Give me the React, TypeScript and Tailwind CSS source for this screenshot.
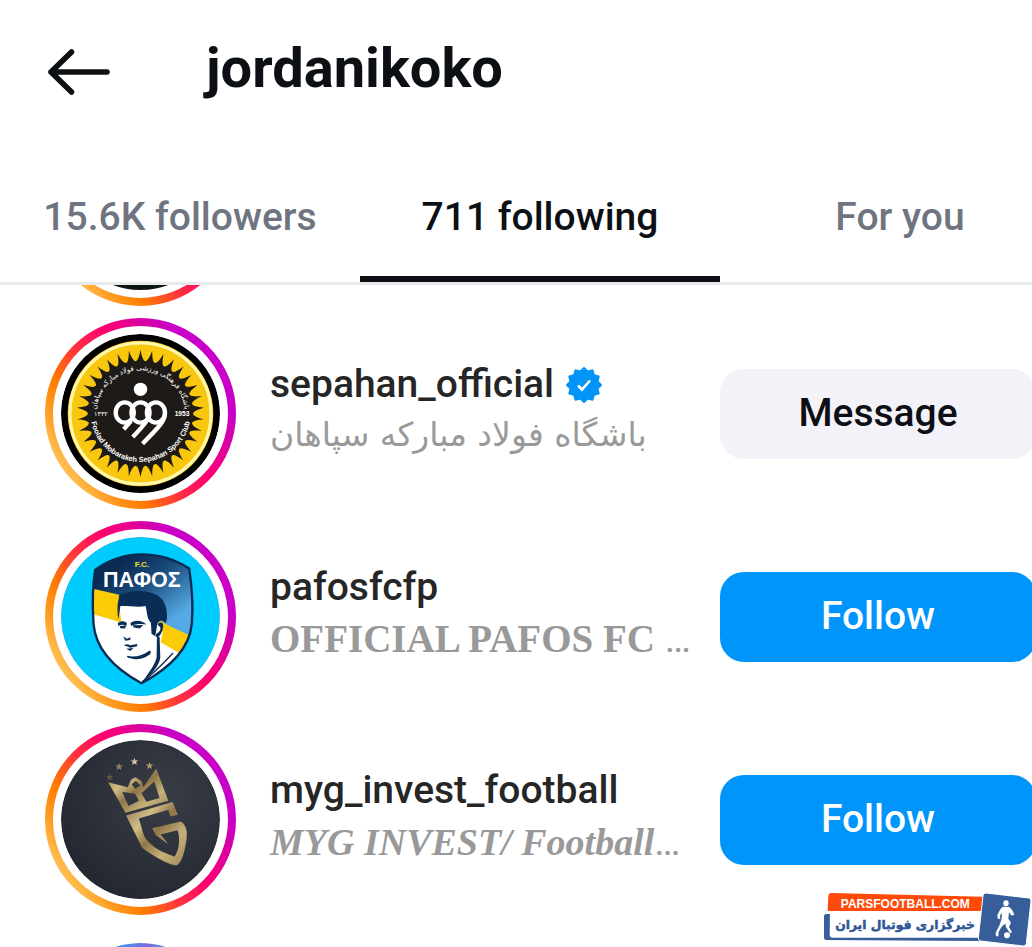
import type { ReactNode } from 'react'
import clsx from 'clsx'

interface Account {
  username: string
  fullName?: string
  nameClass?: string
  dir?: 'rtl' | 'ltr'
  verified?: boolean
  action?: 'Message' | 'Follow'
  story: boolean
  avatar: ReactNode
}

const SANS = "font-['Roboto','DejaVu_Sans',sans-serif]"

// Closed outline alternating between tips, with rounded valleys in between
function burstPath(cx: number, cy: number, count: number, outer: number, valley: number) {
  const step = (Math.PI * 2) / count
  const at = (angle: number, r: number) =>
    `${(cx + Math.cos(angle) * r).toFixed(1)} ${(cy + Math.sin(angle) * r).toFixed(1)}`
  let d = `M${at(-Math.PI / 2, outer)}`
  for (let i = 0; i < count; i++) {
    const a = -Math.PI / 2 + i * step
    d += `C${at(a + step * 0.3, valley)} ${at(a + step * 0.7, valley)} ${at(a + step, outer)}`
  }
  return `${d}Z`
}

function starPath(cx: number, cy: number, outer: number, inner: number, points: number) {
  const list: string[] = []
  for (let i = 0; i < points * 2; i++) {
    const a = -Math.PI / 2 + (i * Math.PI) / points
    const r = i % 2 === 0 ? outer : inner
    list.push(`${(cx + Math.cos(a) * r).toFixed(1)},${(cy + Math.sin(a) * r).toFixed(1)}`)
  }
  return list.join(' ')
}

function SepahanLogo() {
  return (
    <svg viewBox="63 191 474 474" className="size-full" aria-hidden="true">
      <defs>
        <path id="sepahan-top" d="M167 432A133 133 0 0 1 433 432" />
        <path id="sepahan-bottom" d="M151 440A150 150 0 0 0 449 440" />
      </defs>
      <circle cx="300" cy="428" r="237" fill="#000" />
      <circle cx="300" cy="428" r="217" fill="#f3c91c" />
      <circle cx="300" cy="428" r="210" fill="none" stroke="#fff6b0" strokeWidth="9" />
      <circle cx="300" cy="428" r="204" fill="#f9c80e" />
      <path d={burstPath(300, 428, 34, 190, 146)} fill="#1d1a17" />
      <text
        fill="#fff"
        fontSize="21"
        textAnchor="middle"
        direction="rtl"
        className="font-['DejaVu_Sans',sans-serif]"
      >
        <textPath href="#sepahan-top" startOffset="50%">
          باشگاه فرهنگی ورزشی فولاد مبارکه سپاهان
        </textPath>
      </text>
      <text
        fill="#fff"
        fontSize="22"
        fontWeight="700"
        textAnchor="middle"
        className="font-['Liberation_Sans',sans-serif]"
      >
        <textPath href="#sepahan-bottom" startOffset="50%">
          Foolad Mobarakeh Sepahan Sport Club
        </textPath>
      </text>
      <text x="424" y="435" fill="#fff" fontSize="20" fontWeight="700" textAnchor="middle" className="font-['Liberation_Sans',sans-serif]">
        1953
      </text>
      <text x="182" y="435" fill="#fff" fontSize="19" textAnchor="middle" className="font-['DejaVu_Sans',sans-serif]">
        ۱۳۳۲
      </text>
      <circle cx="300" cy="356" r="20" fill="#fff" />
      <g fill="none" stroke="#fff" strokeWidth="13">
        <ellipse cx="253" cy="425" rx="27" ry="30" />
        <ellipse cx="300" cy="425" rx="27" ry="30" />
        <ellipse cx="346" cy="425" rx="27" ry="30" />
        <path d="M272 450L250 475M326 436Q320 454 277 498M373 425C376 448 350 474 306 518" />
      </g>
    </svg>
  )
}

function PafosLogo() {
  const shield =
    'M303 118C358 118 405 134 445 160C452 205 458 265 453 325C446 400 385 458 303 502C222 458 166 400 160 325C156 265 157 210 165 164C206 134 250 118 303 118Z'
  return (
    <svg viewBox="63 66 474 474" className="size-full" aria-hidden="true">
      <defs>
        <linearGradient id="pafos-sky" x1="0.3" y1="0.1" x2="0.6" y2="0.62">
          <stop offset="0" stopColor="#0b2b54" />
          <stop offset="0.4" stopColor="#1a4c7c" />
          <stop offset="1" stopColor="#55a9e4" />
        </linearGradient>
        <clipPath id="pafos-shield">
          <path d={shield} />
        </clipPath>
      </defs>
      <circle cx="300" cy="303" r="236" fill="#00cbff" stroke="#16a5d3" strokeWidth="2" />
      <g clipPath="url(#pafos-shield)">
        <rect x="150" y="110" width="310" height="400" fill="url(#pafos-sky)" />
        <path d="M150 218L236 238L380 328L460 366V520H150Z" fill="#fccb08" />
        <path d="M150 293L232 318L360 380L460 438V520H150Z" fill="#fff" />
        <path d="M236 268H335L366 350L352 420L340 455L300 500L262 410L250 370Z" fill="#fff" />
      </g>
      <path
        d="M234 312C230 286 231 262 236 247C233 240 240 234 249 236C270 224 318 224 341 236C366 244 381 272 379 307C377 322 374 326 370 318C364 312 354 316 350 326L344 361L333 355L331 322C318 309 320 287 315 272C295 276 275 272 240 272Z"
        fill="#092d55"
      />
      <g fill="#092d55">
        <path d="M232 323C240 315 250 315 259 322L258 331C248 326 241 327 234 331Z" />
        <path d="M270 323C284 312 304 314 317 327C302 324 286 325 272 331Z" />
        <path d="M238 331L257 330L254 339L240 338ZM277 329L308 328L298 339L280 336Z" />
        <path d="M248 362L259 369L271 365L269 373L255 375Z" />
        <path d="M249 388L262 386L269 389L290 385L290 392L270 396Z" />
        <path d="M257 399L279 397L270 406Z" />
        <path d="M260 420C280 426 307 420 326 405C334 403 331 414 325 418C303 434 276 433 260 424Z" />
        <path d="M350 326C363 314 372 323 366 342C362 357 354 368 344 362L348 354C359 350 363 336 356 332Z" />
        <path d="M349 360L357 364L359 425C356 452 327 480 306 499C323 470 342 450 348 425Z" />
      </g>
      <path d="M397 412C372 438 336 478 305 497" fill="none" stroke="#092d55" strokeWidth="4" />
      <path d={shield} fill="none" stroke="#0a2a50" strokeWidth="7" />
      <text x="304" y="154" fill="#f2e235" fontSize="24" fontWeight="700" textAnchor="middle" className="font-['Liberation_Sans',sans-serif]">
        F.C.
      </text>
      <text x="304" y="216" fill="#fff" fontSize="64" fontWeight="700" textAnchor="middle" className="font-['Liberation_Sans',sans-serif]">
        ΠΑΦΟΣ
      </text>
    </svg>
  )
}

function MygLogo() {
  return (
    <svg viewBox="63 66 474 474" className="size-full" aria-hidden="true">
      <defs>
        <linearGradient id="myg-gold" x1="0" y1="0" x2="1" y2="0.9">
          <stop offset="0" stopColor="#8b744d" />
          <stop offset="0.3" stopColor="#d2bd87" />
          <stop offset="0.5" stopColor="#8f7647" />
          <stop offset="0.75" stopColor="#c6b07a" />
          <stop offset="1" stopColor="#a18b5c" />
        </linearGradient>
        <radialGradient id="myg-bg" cx="0.65" cy="0.35" r="0.75">
          <stop offset="0" stopColor="#393d45" />
          <stop offset="1" stopColor="#22262e" />
        </radialGradient>
      </defs>
      <circle cx="300" cy="303" r="237" fill="url(#myg-bg)" />
      <g fill="url(#myg-gold)" fillRule="evenodd">
        <path d="M204 192L262 207L272 184L285 177L304 190L308 207L347 152L383 247L255 283ZM246 221L284 226L295 247L264 263ZM303 225L341 190L357 239L318 250ZM274 198L284 211L300 202L286 188Z" />
        <path d="M257 291L396 251L411 289L389 294L383 274L295 300L310 350C323 378 361 402 402 413C418 388 418 354 410 335L360 348L382 376L346 350L335 329L420 309C439 320 441 346 436 371C431 403 422 431 410 439C393 445 324 403 305 387Z" />
      </g>
      <polygon points={starPath(208, 177, 11, 5, 5)} fill="#675540" />
      <polygon points={starPath(236, 146, 12, 5, 5)} fill="#938168" />
      <polygon points={starPath(282, 131, 12, 5, 5)} fill="#d8c7a7" />
      <polygon points={starPath(327, 143, 12, 5, 5)} fill="#ae9872" />
    </svg>
  )
}

function StoryRing() {
  return (
    <svg viewBox="0 0 191 191" className="absolute inset-0 size-full" aria-hidden="true">
      <defs>
        <linearGradient id="story-ring" x1="0.09" y1="0.787" x2="0.91" y2="0.213">
          <stop offset="0" stopColor="#ffbb4c" />
          <stop offset="0.1" stopColor="#ff9a22" />
          <stop offset="0.22" stopColor="#ff7d00" />
          <stop offset="0.42" stopColor="#ff3040" />
          <stop offset="0.6" stopColor="#ff0070" />
          <stop offset="0.8" stopColor="#d800a4" />
          <stop offset="0.92" stopColor="#c800c8" />
          <stop offset="1" stopColor="#c800c8" />
        </linearGradient>
      </defs>
      <circle cx="95.5" cy="95.5" r="91.5" fill="none" stroke="url(#story-ring)" strokeWidth="8" />
    </svg>
  )
}

function VerifiedBadge() {
  return (
    <svg viewBox="0 0 36 36" className="size-9" role="img" aria-label="Verified">
      <polygon points={starPath(18, 18, 17, 14, 12)} fill="#0095f6" stroke="#0095f6" strokeWidth="2" strokeLinejoin="round" />
      <path d="M12 18.5L16 22.5L24 13.5" fill="none" stroke="#fff" strokeWidth="2.6" />
    </svg>
  )
}

function Watermark() {
  return (
    <svg viewBox="0 0 651 186" className="absolute right-0 bottom-0 w-[217px]">
      <path d="M27 94Q27 87 35 87H495V168L34 165Q27 165 27 158Z" fill="#375d9a" />
      <path d="M40 33Q41 24 49 24L505 35V78H38Z" fill="#ff4a0a" />
      <path d="M45 78H500L490 158H53Q44 158 44 149Z" fill="#fff" />
      <path d="M513 24L641 39Q649 40 648 48L634 176Q633 184 625 183L497 168Q489 167 490 159L504 32Q505 23 513 24Z" fill="#375d9a" stroke="#fff" strokeWidth="3" />
      <text x="271" y="69" fill="#fff" fontSize="36" fontWeight="700" textAnchor="middle" className="font-['Liberation_Sans',sans-serif]">
        PARSFOOTBALL.COM
      </text>
      <text x="270" y="131" fill="#2f5597" stroke="#2f5597" strokeWidth="1.5" fontSize="37" fontWeight="700" textAnchor="middle" direction="rtl" className="font-['DejaVu_Sans',sans-serif]">
        خبرگزاری فوتبال ایران
      </text>
      <g fill="#fff">
        <ellipse cx="573" cy="55" rx="8" ry="9" />
        <path d="M563 65L583 66L592 76L598 89L590 92L582 82L580 101L588 113L582 126L591 142L585 145L573 126L571 116L561 124L551 140L550 154L543 154L542 143L554 119L560 101L561 83L555 92L556 102L548 101L547 90L556 73Z" />
        <circle cx="576" cy="151" r="9" />
      </g>
    </svg>
  )
}

const accounts: Account[] = [
  {
    username: '',
    story: true,
    avatar: <div className="size-full bg-[#0d1512]" />,
  },
  {
    username: 'sepahan_official',
    fullName: 'باشگاه فولاد مبارکه سپاهان',
    nameClass: "pb-1 font-['DejaVu_Sans',sans-serif] text-[33px]",
    dir: 'rtl',
    verified: true,
    action: 'Message',
    story: true,
    avatar: <SepahanLogo />,
  },
  {
    username: 'pafosfcfp',
    fullName: 'OFFICIAL PAFOS FC',
    nameClass: "font-['Liberation_Serif',serif] font-bold text-[39px]",
    action: 'Follow',
    story: true,
    avatar: <PafosLogo />,
  },
  {
    username: 'myg_invest_football',
    fullName: 'MYG INVEST/ Football',
    nameClass: "font-['Liberation_Serif',serif] font-bold italic text-[38px]",
    action: 'Follow',
    story: true,
    avatar: <MygLogo />,
  },
  {
    username: '',
    story: false,
    avatar: <div className="size-full bg-linear-to-r from-[#3f8df0] from-40% via-[#7a68d8] via-55% to-[#4a90ea] to-65%" />,
  },
]

const tabs = ['15.6K followers', '711 following', 'For you']

function AccountRow({ account }: { account: Account }) {
  const { username, fullName, nameClass, dir, verified, action, story, avatar } = account
  return (
    <li className="flex h-[203px] items-center pl-[45px]">
      <div className="relative size-[191px] shrink-0 p-4">
        {story && <StoryRing />}
        <div className="size-full overflow-hidden rounded-full">{avatar}</div>
      </div>
      {username && (
        <div className="ml-[34px] min-w-0 flex-1 pb-1.5">
          <div className="flex h-[52px] items-center gap-3">
            <span className="text-[39px] font-medium whitespace-nowrap text-[#262626]">{username}</span>
            {verified && <VerifiedBadge />}
          </div>
          <div className="flex h-[52px] items-center text-[39px] whitespace-pre text-[#999]">
            <span dir={dir} className={nameClass}>{fullName}</span>
            {dir !== 'rtl' && <span>{fullName?.endsWith('FC') ? ' …' : '…'}</span>}
          </div>
        </div>
      )}
      {action && (
        <button
          type="button"
          className={clsx(
            '-mr-1 h-[90px] w-[316px] shrink-0 rounded-3xl text-[39px] font-medium',
            action === 'Follow' ? 'bg-[#0095fa] text-white' : 'bg-[#f3f2f8] text-[#0c1014]',
          )}
        >
          {action}
        </button>
      )}
    </li>
  )
}

export default function App() {
  return (
    <div className={clsx('relative flex h-screen flex-col overflow-hidden bg-white', SANS)}>
      <header className="flex h-36 shrink-0 items-center pl-12">
        <button type="button" aria-label="Back">
          <svg viewBox="0 0 62 46" className="w-[62px]" fill="none" stroke="#0c1014" strokeWidth="5.6" strokeLinecap="round" strokeLinejoin="round">
            <path d="M59 23H3M23.5 3L3 23L23.5 43" />
          </svg>
        </button>
        <h1 className="ml-24 pb-2 text-[56px] font-bold text-[#0c1014]">jordanikoko</h1>
      </header>
      <div className="shrink-0 border-b-3 border-[#e8e9ec]">
        <div role="tablist" className="-mr-12 grid grid-cols-3">
          {tabs.map((tab, i) => (
            <button
              key={tab}
              type="button"
              role="tab"
              aria-selected={i === 1}
              className={clsx(
                'h-[138px] border-b-6 pt-3.5 text-[39px] font-medium',
                i === 1 ? 'border-[#0c1014] text-[#0c1014]' : 'border-transparent text-[#6f7580]',
              )}
            >
              {tab}
            </button>
          ))}
        </div>
      </div>
      <main className="min-h-0 flex-1 overflow-hidden">
        {/* list is scrolled part of the way into its first row */}
        <ul className="-mt-44">
          {accounts.map((account, i) => (
            <AccountRow key={i} account={account} />
          ))}
        </ul>
      </main>
      <Watermark />
    </div>
  )
}
